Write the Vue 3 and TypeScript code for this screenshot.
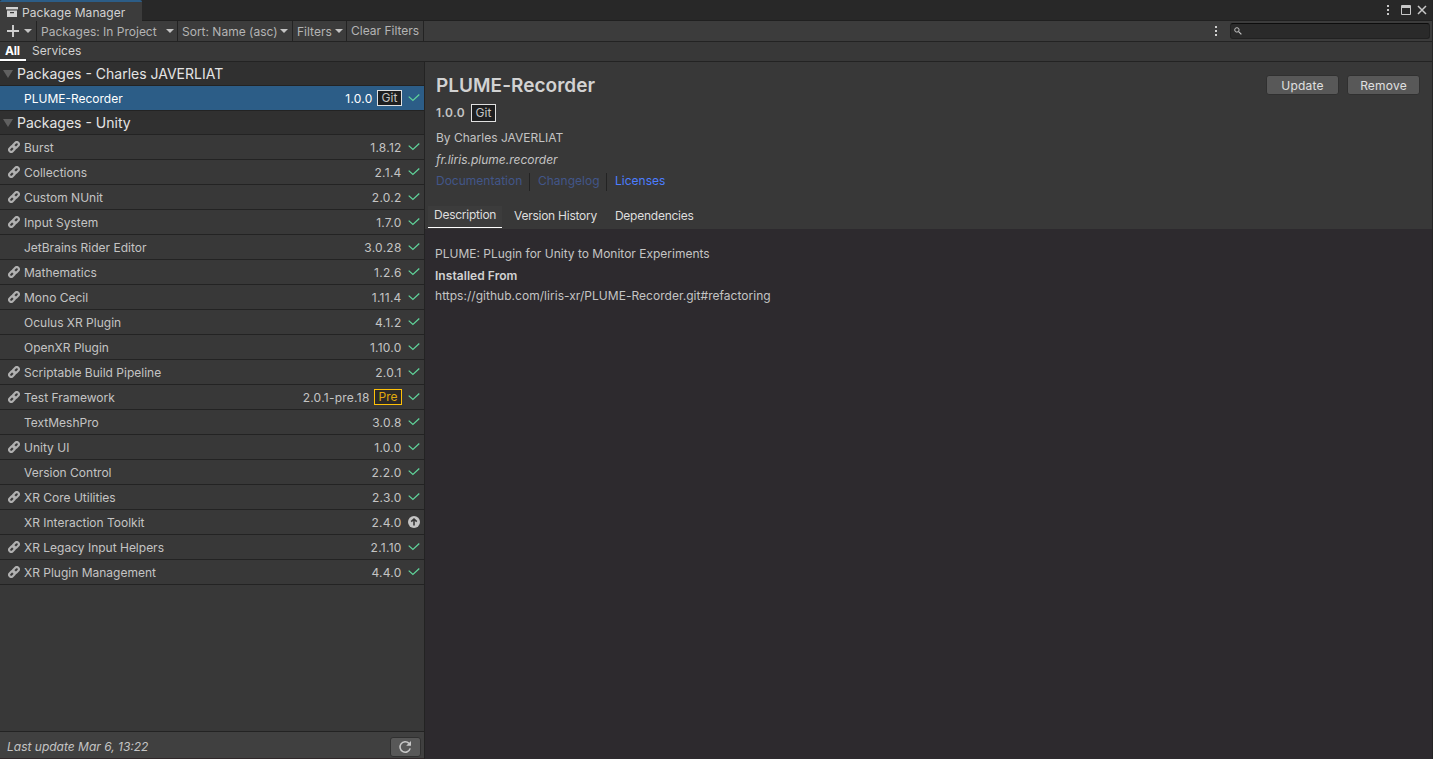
<script setup lang="ts">
import { ref } from 'vue'

interface Pkg {
  name: string
  version: string
  linked?: boolean
  tag?: 'Git' | 'Pre'
  update?: boolean
}
interface Group {
  title: string
  items: Pkg[]
}

const selected = ref('PLUME-Recorder')
const groups: Group[] = [
  {
    title: 'Packages - Charles JAVERLIAT',
    items: [{ name: 'PLUME-Recorder', version: '1.0.0', tag: 'Git' }],
  },
  {
    title: 'Packages - Unity',
    items: [
      { name: 'Burst', version: '1.8.12', linked: true },
      { name: 'Collections', version: '2.1.4', linked: true },
      { name: 'Custom NUnit', version: '2.0.2', linked: true },
      { name: 'Input System', version: '1.7.0', linked: true },
      { name: 'JetBrains Rider Editor', version: '3.0.28' },
      { name: 'Mathematics', version: '1.2.6', linked: true },
      { name: 'Mono Cecil', version: '1.11.4', linked: true },
      { name: 'Oculus XR Plugin', version: '4.1.2' },
      { name: 'OpenXR Plugin', version: '1.10.0' },
      { name: 'Scriptable Build Pipeline', version: '2.0.1', linked: true },
      { name: 'Test Framework', version: '2.0.1-pre.18', linked: true, tag: 'Pre' },
      { name: 'TextMeshPro', version: '3.0.8' },
      { name: 'Unity UI', version: '1.0.0', linked: true },
      { name: 'Version Control', version: '2.2.0' },
      { name: 'XR Core Utilities', version: '2.3.0', linked: true },
      { name: 'XR Interaction Toolkit', version: '2.4.0', update: true },
      { name: 'XR Legacy Input Helpers', version: '2.1.10', linked: true },
      { name: 'XR Plugin Management', version: '4.4.0', linked: true },
    ],
  },
]
</script>

<template>
  <div class="window">
    <header class="titlebar">
      <div class="window-tab">
        <svg class="archive" width="12" height="12" viewBox="0 0 12 12">
          <path d="M0 1h12v2.4h-12z" fill="#d2d2d2" />
          <path fill-rule="evenodd" d="M1 4.4h10v6.6h-10zM4 6v1.2h4V6z" fill="#d2d2d2" />
        </svg>
        <span>Package Manager</span>
      </div>
      <div class="window-controls">
        <svg width="4" height="12" viewBox="0 0 4 12" fill="#c8c8c8">
          <rect x="1" y="1" width="2" height="2" /><rect x="1" y="5" width="2" height="2" /><rect x="1" y="9" width="2" height="2" />
        </svg>
        <svg class="maximize" width="10" height="10" viewBox="0 0 10 10" fill="none" stroke="#c8c8c8">
          <path d="M.5 .5h9v9h-9zM0 1.5h10M0 2.5h10" />
        </svg>
        <svg class="close" width="10" height="10" viewBox="0 0 10 10" fill="none" stroke="#c8c8c8" stroke-width="1.5">
          <path d="M1 1l8 8M9 1l-8 8" />
        </svg>
      </div>
    </header>

    <div class="toolbar">
      <button class="tool add">
        <svg width="12" height="12" viewBox="0 0 12 12" stroke="#d0d0d0" stroke-width="1.9"><path d="M6 0v12M0 6h12" /></svg>
        <i class="caret"></i>
      </button>
      <button class="tool scope"><span>Packages: In Project</span><i class="caret"></i></button>
      <button class="tool sort"><span>Sort: Name (asc)</span><i class="caret"></i></button>
      <button class="tool filters"><span>Filters</span><i class="caret"></i></button>
      <button class="tool clear"><span>Clear Filters</span></button>
      <svg class="more" width="4" height="12" viewBox="0 0 4 12" fill="#d0d0d0">
        <rect x="1" y="1" width="2" height="2" /><rect x="1" y="5" width="2" height="2" /><rect x="1" y="9" width="2" height="2" />
      </svg>
      <div class="search">
        <svg width="8" height="8" viewBox="0 0 8 8" fill="none" stroke="#c4c4c4">
          <circle cx="2.9" cy="2.9" r="2.2" stroke-width="1" /><path d="M4.6 4.6L7.4 7.4" stroke-width="1.2" />
        </svg>
      </div>
    </div>

    <nav class="page-tabs">
      <span class="page-tab active">All</span>
      <span class="page-tab">Services</span>
    </nav>

    <div class="body">
      <aside class="sidebar">
        <div class="list">
          <section v-for="g in groups" :key="g.title">
            <h2 class="group"><i class="fold"></i><span>{{ g.title }}</span></h2>
            <div
              v-for="p in g.items"
              :key="p.name"
              class="row"
              :class="{ selected: p.name === selected }"
              @click="selected = p.name"
            >
              <span class="link">
                <svg v-if="p.linked" width="12" height="12" viewBox="0 0 12 12" fill="none" stroke="#b0b0b0" stroke-width="2.1">
                  <rect x="-3.3" y="-2.1" width="6.6" height="4.2" rx="2.1" transform="translate(4.1 7.9) rotate(-45)" />
                  <rect x="-3.3" y="-2.1" width="6.6" height="4.2" rx="2.1" transform="translate(7.9 4.1) rotate(-45)" />
                </svg>
              </span>
              <span class="name">{{ p.name }}</span>
              <span class="version">{{ p.version }}</span>
              <span v-if="p.tag" class="tag" :class="p.tag.toLowerCase()">{{ p.tag }}</span>
              <svg v-if="p.update" class="state" width="12" height="12" viewBox="0 0 12 12">
                <circle cx="6" cy="6" r="6" fill="#c4c4c4" />
                <path d="M6 9.5V3.4M3.2 5.7L6 3l2.8 2.7" fill="none" stroke="#383838" stroke-width="1.6" />
              </svg>
              <svg v-else class="state" width="12" height="12" viewBox="0 0 12 12">
                <path d="M.7 4.6l4.2 3.9L11.3 2.5" fill="none" stroke="#5fd39a" stroke-width="1.25" />
              </svg>
            </div>
          </section>
        </div>
        <footer class="status">
          <span>Last update Mar 6, 13:22</span>
          <button class="refresh">
            <svg width="14" height="14" viewBox="0 0 14 14">
              <path d="M11 3.4A5.2 5.2 0 1 0 12.2 8.4" fill="none" stroke="#c8c8c8" stroke-width="1.6" />
              <path d="M13 1v4.8H8.2z" fill="#c8c8c8" />
            </svg>
          </button>
        </footer>
      </aside>

      <main class="details">
        <div class="summary">
          <div class="heading">
            <h1>PLUME-Recorder</h1>
            <div class="actions">
              <button>Update</button>
              <button>Remove</button>
            </div>
          </div>
          <div class="release"><b>1.0.0</b><span class="tag git">Git</span></div>
          <div class="author">By Charles JAVERLIAT</div>
          <div class="id">fr.liris.plume.recorder</div>
          <div class="links">
            <a class="off">Documentation</a><a class="off">Changelog</a><a>Licenses</a>
          </div>
          <div class="detail-tabs">
            <span class="active">Description</span><span>Version History</span><span>Dependencies</span>
          </div>
        </div>
        <div class="content">
          <p>PLUME: PLugin for Unity to Monitor Experiments</p>
          <p class="strong">Installed From</p>
          <p class="url">https://github.com/liris-xr/PLUME-Recorder.git#refactoring</p>
        </div>
      </main>
    </div>
  </div>
</template>

<style>
html,
body {
  background: #383838;
  overflow: hidden;
}
</style>

<style scoped>
* {
  box-sizing: border-box;
}
.window {
  width: 1433px;
  height: 759px;
  display: flex;
  flex-direction: column;
  background: #383838;
  color: #c4c4c4;
  font: 12px/16px Inter, "Liberation Sans", sans-serif;
  letter-spacing: 0;
  white-space: nowrap;
  border-right: 1px solid #242424;
}
button {
  font: inherit;
  letter-spacing: inherit;
  color: inherit;
  border: 0;
  padding: 0;
  background: none;
}
h1,
h2,
p {
  margin: 0;
}
svg {
  display: block;
  flex: none;
}

.titlebar {
  height: 21px;
  display: flex;
  justify-content: space-between;
  background: #282828;
  border-bottom: 1px solid #202020;
}
.window-tab {
  width: 142px;
  height: 21px;
  padding: 3px 0 0 6px;
  display: flex;
  gap: 4px;
  background: #3c3c3c;
  border-top: 2px solid #2c5d87;
  border-radius: 2px 2px 0 0;
  color: #d2d2d2;
  letter-spacing: 0.05px;
}
.archive {
  margin-top: 1px;
}
.window-controls {
  display: flex;
  align-items: flex-start;
  padding: 4px 5px 0 0;
}
.maximize {
  margin: 1px 6px 0 11px;
}
.close {
  margin-top: 1px;
}

.toolbar {
  height: 21px;
  display: flex;
  background: #3c3c3c;
  border-bottom: 1px solid #232323;
}
.tool {
  height: 20px;
  display: flex;
  align-items: center;
  justify-content: space-between;
  border-right: 1px solid #232323;
  color: #b4b4b4;
}
.tool span {
  padding-top: 2px;
}
.caret {
  width: 0;
  height: 0;
  border: 4px solid transparent;
  border-top-color: #c4c4c4;
  border-bottom: 0;
}
.add {
  width: 37px;
  padding: 0 4px 0 7px;
}
.scope {
  width: 141px;
  padding: 0 3px 0 4px;
}
.sort {
  width: 115px;
  padding: 0 4px;
}
.filters {
  width: 54px;
  padding: 0 3px 0 4px;
}
.clear {
  width: 77px;
  padding: 0 4px 2px;
}
.clear span {
  padding-top: 1px;
}
.more {
  margin: 4px 12px 0 auto;
}
.search {
  width: 200px;
  height: 16px;
  margin: 2px 2px 0 0;
  padding: 3px 3px;
  background: #2a2a2a;
  border: 1px solid #212121;
  border-top-color: #0d0d0d;
  border-radius: 3px;
}

.page-tabs {
  height: 20px;
  display: flex;
  border-bottom: 1px solid #232323;
}
.page-tab {
  height: 19px;
  padding: 1px 6px 0;
  color: #d2d2d2;
}
.page-tab.active {
  width: 26px;
  padding-left: 5px;
  border-bottom: 2px solid #fff;
  font-weight: 700;
  letter-spacing: -0.2px;
  color: #fff;
}

.body {
  flex: 1;
  display: flex;
  min-height: 0;
}
.sidebar {
  width: 425px;
  display: flex;
  flex-direction: column;
  border-right: 1px solid #232323;
}
.list {
  flex: 1;
}
.group {
  height: 24px;
  display: flex;
  align-items: center;
  background: #303030;
  border-bottom: 1px solid #232323;
  font-size: 14px;
  font-weight: 400;
  color: #e4e4e4;
}
.fold {
  margin: 1px 4px 0 3px;
  border: 5px solid transparent;
  border-top: 8px solid #606060;
  border-bottom: 0;
}
.row {
  height: 25px;
  padding: 0 4px 1px 8px;
  display: flex;
  align-items: center;
  border-bottom: 1px solid #232323;
}
.row.selected {
  background: #2c5d87;
  color: #fff;
}
.link {
  width: 16px;
}
.name {
  flex: 1;
  padding-top: 2px;
}
.version {
  padding-top: 2px;
  margin-right: -0.6px;
  letter-spacing: 0.25px;
}
.state {
  margin-left: 7px;
}
.tag {
  height: 16px;
  margin-left: 5px;
  border: 1px solid #e0e0e0;
  background: #1e1f20;
  color: #c4c4c4;
  line-height: 14px;
  text-align: center;
}
.tag + .state {
  margin-left: 6px;
}
.tag.git {
  width: 25px;
}
.tag.pre {
  width: 28px;
  border-color: #ffc107;
  color: #e0a90c;
  background: #2c2a28;
}
.status {
  height: 28px;
  padding: 3px 3px 0 7px;
  display: flex;
  justify-content: space-between;
  align-items: center;
  background: #404040;
  border-top: 1px solid #232323;
  border-bottom: 1px solid #30282a;
  font-style: italic;
}
.refresh {
  width: 31px;
  height: 20px;
  padding-right: 2px;
  display: flex;
  justify-content: center;
  align-items: center;
  background: #585858;
  border: 1px solid #303030;
  border-radius: 3px;
}

.details {
  flex: 1;
  display: flex;
  flex-direction: column;
}
.summary {
  height: 167px;
  padding-left: 11px;
}
.heading {
  display: flex;
  justify-content: space-between;
  padding: 13px 12px 0 0;
}
h1 {
  padding-top: 1px;
  font-size: 19px;
  line-height: 19px;
  font-weight: 600;
  letter-spacing: 0.03px;
  color: #d2d2d2;
}
.actions {
  display: flex;
  gap: 8px;
}
.actions button {
  width: 73px;
  height: 20px;
  padding-top: 1px;
  background: #585858;
  border: 1px solid #303030;
  border-radius: 3px;
  color: #e0e0e0;
  letter-spacing: 0.2px;
}
.release {
  height: 18px;
  margin-top: 9px;
  display: flex;
  align-items: center;
}
.release b {
  width: 30px;
  font-weight: 600;
  letter-spacing: 0.25px;
}
.release .tag {
  height: 18px;
  line-height: 16px;
}
.author {
  margin-top: 8px;
}
.id {
  margin-top: 6px;
  font-style: italic;
}
.links {
  display: flex;
  margin-top: 5px;
}
.links a {
  color: #4c7eff;
  height: 18px;
  margin-right: 8px;
}
.links a.off {
  color: #425689;
  width: 94px;
  border-right: 1px solid #232323;
}
.links a.off + .off {
  width: 69px;
}
.detail-tabs {
  display: flex;
  gap: 6px;
  margin: 15px 0 0 -8px;
  letter-spacing: -0.25px;
}
.detail-tabs span {
  padding: 2px 6px 0;
  height: 22px;
  color: #dedede;
}
.detail-tabs .active {
  width: 74px;
  padding-top: 1px;
  border-bottom: 1px solid #fff;
  background: #3c3c3c;
}
.content {
  flex: 1;
  padding: 17px 10px;
  background: #2d2a2e;
}
.strong {
  margin-top: 6px;
  font-weight: 600;
  letter-spacing: 0.05px;
  color: #d2d2d2;
}
.url {
  margin-top: 4px;
  letter-spacing: 0.03px;
}
</style>
